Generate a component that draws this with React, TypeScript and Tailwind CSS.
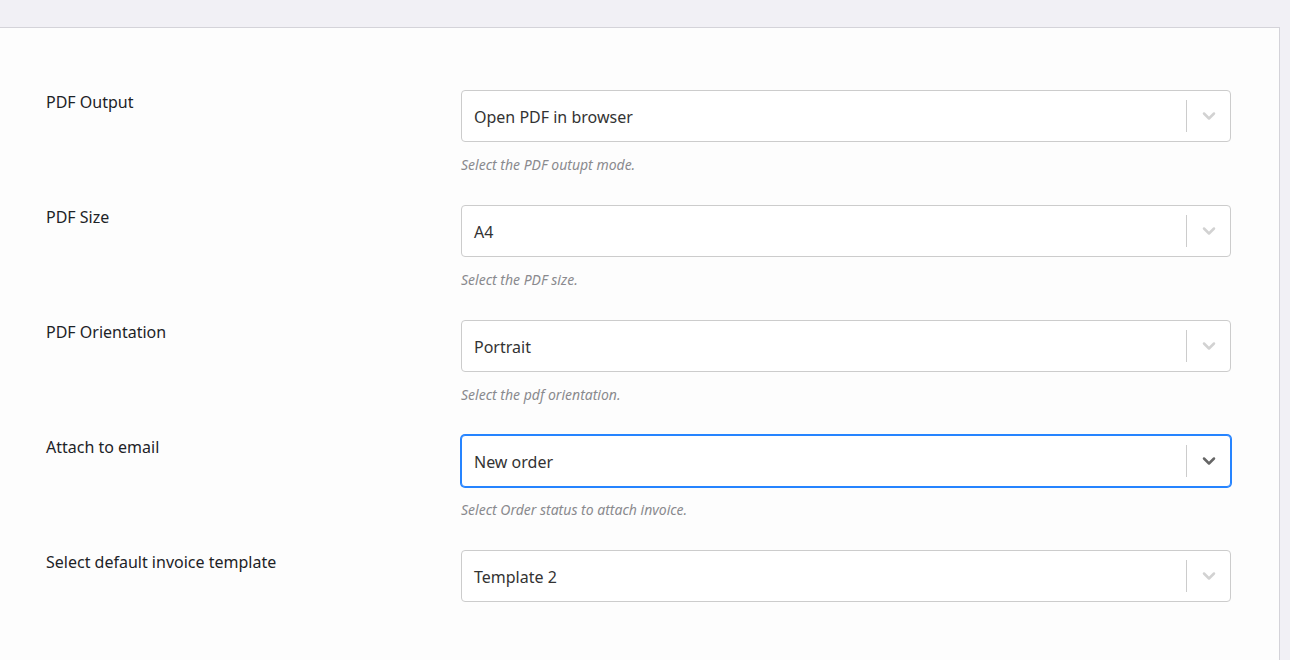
import { ChevronDown } from "lucide-react";

type Field = {
  label: string;
  value: string;
  hint?: string;
  focused?: boolean;
};

const FIELDS: Field[] = [
  { label: "PDF Output", value: "Open PDF in browser", hint: "Select the PDF outupt mode." },
  { label: "PDF Size", value: "A4", hint: "Select the PDF size." },
  { label: "PDF Orientation", value: "Portrait", hint: "Select the pdf orientation." },
  { label: "Attach to email", value: "New order", hint: "Select Order status to attach invoice.", focused: true },
  { label: "Select default invoice template", value: "Template 2" },
];

function SelectBox({ value, focused }: { value: string; focused?: boolean }) {
  return (
    <div
      className={
        focused
          ? "flex h-[52px] w-[770px] items-center rounded-[4px] border border-[#2684ff] bg-white shadow-[0_0_0_1px_#2684ff]"
          : "flex h-[52px] w-[770px] items-center rounded-[4px] border border-[#cccccc] bg-white"
      }
    >
      <div className="flex-1 pl-3 pt-[2px] text-[16px] text-[#333333]">{value}</div>
      <span className="h-8 w-px bg-[#cccccc]" />
      <div className="flex w-[43px] items-center justify-center">
        <ChevronDown
          size={20}
          strokeWidth={3}
          className={focused ? "text-[#666666]" : "text-[#d2d2d2]"}
        />
      </div>
    </div>
  );
}

export default function App() {
  return (
    <div
      className="min-h-[660px] w-full bg-[#f1f0f5] pt-[27px] text-[#1d2327]"
      style={{ fontFamily: '"Segoe UI", "Noto Sans", "Open Sans", sans-serif' }}
    >
      <div className="mr-[10px] min-h-[633px] border-t border-r border-[#d4d3d9] bg-[#fdfdfd] pl-[46px] pt-[62px]">
        {FIELDS.map((f) => (
          <div key={f.label} className="flex h-[115px]">
            <div className="w-[415px] text-[16px] leading-[24px]">{f.label}</div>
            <div className="flex flex-col">
              <SelectBox value={f.value} focused={f.focused} />
              {f.hint && (
                <p className="mt-[15px] text-[14px] leading-4 italic text-[#8a8a8e]">{f.hint}</p>
              )}
            </div>
          </div>
        ))}
      </div>
    </div>
  );
}
